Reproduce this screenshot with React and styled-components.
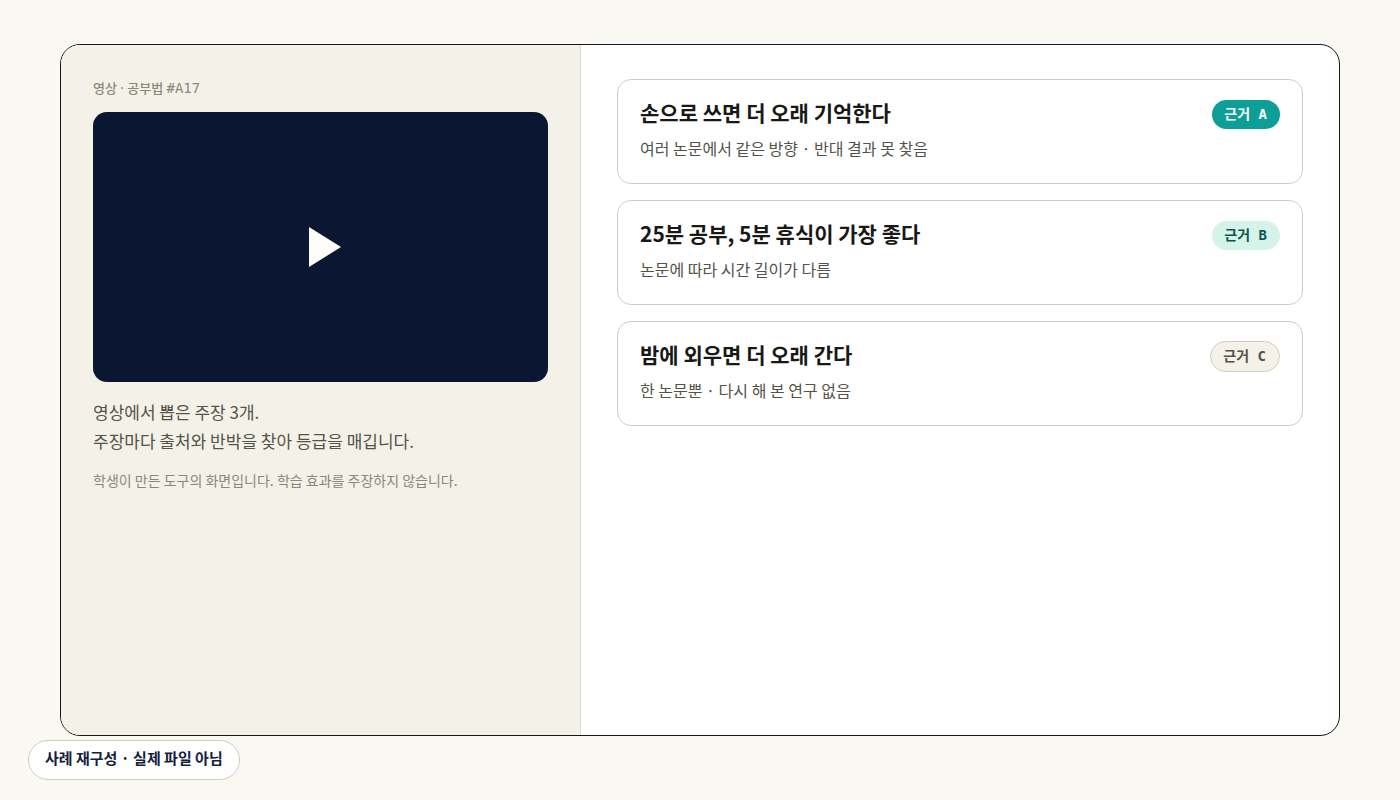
import React from 'react';
import styled, { createGlobalStyle } from 'styled-components';

const GlobalStyle = createGlobalStyle`
    * {
        box-sizing: border-box;
    }
    body {
        margin: 0;
        background-color: #F9F8F3;
        font-family: "Noto Sans CJK KR", "Noto Sans", sans-serif;
        color: #181816;
    }
    h2, p {
        margin: 0;
    }
`

const StyledPage = styled.main`
    display: flex;
    flex-direction: column;
    align-items: flex-start;
    gap: 4px;
    min-height: 100vh;
    padding: 44px 60px 20px 28px;
`

const StyledFrame = styled.div`
    display: grid;
    grid-template-columns: 260fr 379fr;
    flex: 1;
    align-self: stretch;
    margin-left: 32px;
    overflow: hidden;
    border: 1px solid #181816;
    border-radius: 20px;
    background-color: #FFFFFF;
`

const StyledSource = styled.section`
    padding: 32px;
    border-right: 1px solid #DDD9CB;
    background-color: #F4F1E8;
`

const StyledLabel = styled.p`
    padding-bottom: 13px;
    font-family: "Noto Sans", "Noto Sans CJK KR", sans-serif;
    font-size: 13px;
    line-height: 22px;
    font-weight: 500;
    color: #8B8878;
`

const StyledCode = styled.span`
    font-family: "DejaVu Sans Mono", monospace;
    font-size: 14px;
    line-height: 1;
`

const StyledVideo = styled.button`
    display: flex;
    align-items: center;
    justify-content: center;
    width: 100%;
    height: 270px;
    padding: 0 0 0 8px;
    border: none;
    border-radius: 14px;
    background-color: #0B1633;
    cursor: pointer;
`

const StyledSummary = styled.p`
    padding-top: 15px;
    font-size: 17px;
    line-height: 29px;
    color: #55524A;
`

const StyledNote = styled.p`
    padding-top: 13px;
    font-size: 14px;
    line-height: 24px;
    color: #8B8878;
`

const StyledClaims = styled.section`
    display: flex;
    flex-direction: column;
    gap: 16px;
    padding: 34px 36px;
`

const StyledCard = styled.article`
    padding: 19px 22px 22px;
    border: 1px solid #D2CEBD;
    border-radius: 14px;
`

const StyledCardHead = styled.div`
    display: flex;
    align-items: flex-start;
    justify-content: space-between;
    gap: 16px;
    min-height: 37px;
    padding-bottom: 6px;
`

const StyledTitle = styled.h2`
    font-size: 21px;
    line-height: 26px;
    font-weight: 700;
`

const StyledDetail = styled.p`
    font-size: 16px;
    line-height: 25px;
    color: #55524A;
`

const grades = {
    A: { background: '#0D9E98', color: '#FFFFFF', border: 'none' },
    B: { background: '#D5F3E8', color: '#0B5750', border: 'none' },
    C: { background: '#F4F1E8', color: '#55524A', border: '1px solid #D2CEBD' },
}

const StyledBadge = styled.span`
    flex-shrink: 0;
    align-self: center;
    padding: 4px 13px 4px 12px;
    border: ${props => grades[props.$grade].border};
    border-radius: 999px;
    background-color: ${props => grades[props.$grade].background};
    color: ${props => grades[props.$grade].color};
    font-family: "DejaVu Sans Mono", "Noto Sans CJK KR", monospace;
    font-size: 14px;
    line-height: 21px;
    font-weight: 700;
    white-space: nowrap;
`

const StyledNotice = styled.div`
    padding: 4px 16px 8px;
    border: 1px solid #D2CEBD;
    border-radius: 999px;
    background-color: #FFFFFF;
    font-size: 15px;
    line-height: 26px;
    font-weight: 700;
    color: #14213D;
`

const claims = [
    { grade: 'A', title: '손으로 쓰면 더 오래 기억한다', detail: '여러 논문에서 같은 방향 · 반대 결과 못 찾음' },
    { grade: 'B', title: '25분 공부, 5분 휴식이 가장 좋다', detail: '논문에 따라 시간 길이가 다름' },
    { grade: 'C', title: '밤에 외우면 더 오래 간다', detail: '한 논문뿐 · 다시 해 본 연구 없음' },
]

const Claim = ({ grade, title, detail }) => (
    <StyledCard>
        <StyledCardHead>
            <StyledTitle>{title}</StyledTitle>
            <StyledBadge $grade={grade}>근거 {grade}</StyledBadge>
        </StyledCardHead>
        <StyledDetail>{detail}</StyledDetail>
    </StyledCard>
)

const App = () => (
    <>
        <GlobalStyle/>
        <StyledPage>
            <StyledFrame>
                <StyledSource>
                    <StyledLabel>영상 · 공부법 <StyledCode>#A17</StyledCode></StyledLabel>
                    <StyledVideo type="button" aria-label="재생">
                        <svg width="32" height="40" viewBox="0 0 32 40">
                            <path d="M0 0L32 20L0 40Z" fill="#FDFCF6"/>
                        </svg>
                    </StyledVideo>
                    <StyledSummary>
                        영상에서 뽑은 주장 3개.<br/>
                        주장마다 출처와 반박을 찾아 등급을 매깁니다.
                    </StyledSummary>
                    <StyledNote>학생이 만든 도구의 화면입니다. 학습 효과를 주장하지 않습니다.</StyledNote>
                </StyledSource>
                <StyledClaims>
                    {claims.map(claim => <Claim key={claim.grade} {...claim}/>)}
                </StyledClaims>
            </StyledFrame>
            <StyledNotice>사례 재구성 · 실제 파일 아님</StyledNotice>
        </StyledPage>
    </>
)

export default App;
